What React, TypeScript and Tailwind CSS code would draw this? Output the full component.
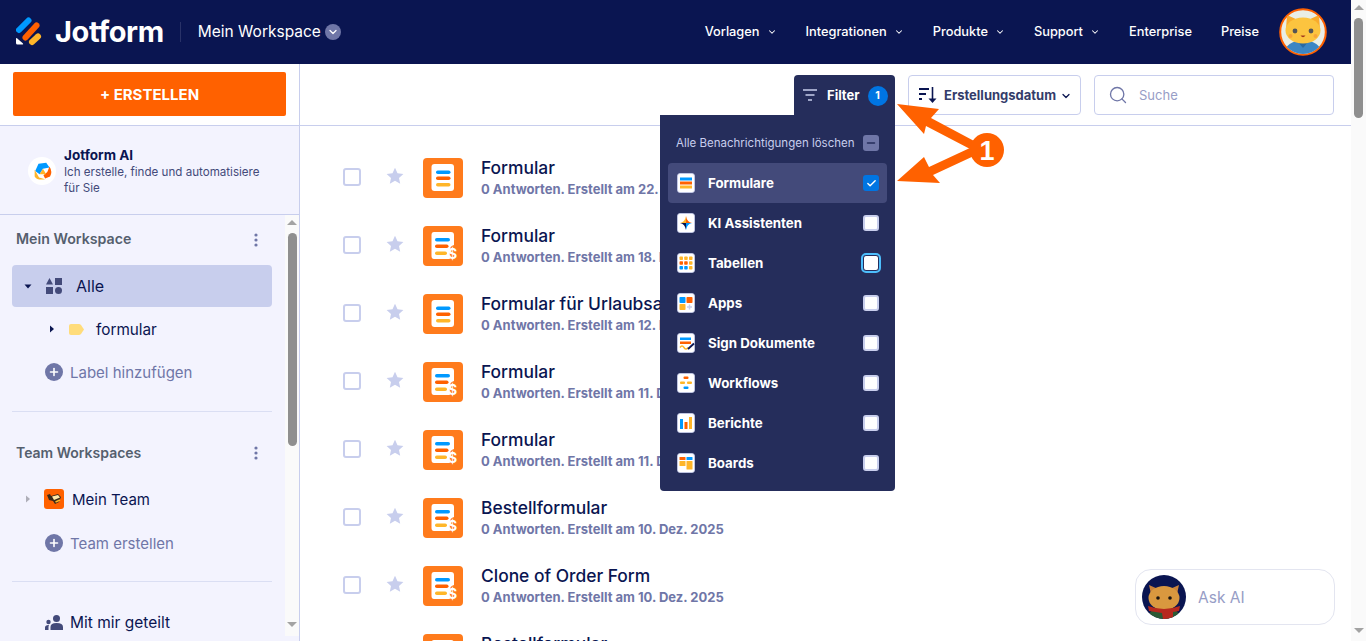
import React from 'react'
import { ChevronDown, Search, Check, Plus, Minus } from 'lucide-react'

const navItems = [
  { label: 'Vorlagen', chevron: true },
  { label: 'Integrationen', chevron: true },
  { label: 'Produkte', chevron: true },
  { label: 'Support', chevron: true },
  { label: 'Enterprise', chevron: false },
  { label: 'Preise', chevron: false },
]

const forms = [
  { title: 'Formular', date: '22. Dez. 2025', pay: false },
  { title: 'Formular', date: '18. Dez. 2025', pay: true },
  { title: 'Formular für Urlaubsantrag', date: '12. Dez. 2025', pay: false },
  { title: 'Formular', date: '11. Dez. 2025', pay: true },
  { title: 'Formular', date: '11. Dez. 2025', pay: true },
  { title: 'Bestellformular', date: '10. Dez. 2025', pay: true },
  { title: 'Clone of Order Form', date: '10. Dez. 2025', pay: true },
  { title: 'Bestellformular', date: '10. Dez. 2025', pay: true },
]

const Logo = () => (
  <svg width="28" height="30" viewBox="0 0 28 30" className="shrink-0">
    <path d="M3 13 L12.5 3.5" stroke="#0099ff" strokeWidth="6" strokeLinecap="round" />
    <path d="M9.5 20.5 L20.5 8.5" stroke="#ff6100" strokeWidth="6" strokeLinecap="round" />
    <path d="M16 25 L22 19.5" stroke="#ffb629" strokeWidth="6" strokeLinecap="round" />
    <path d="M0 21.5 Q0 20.5 1 21.2 L7 26.6 Q7.6 27.6 6.5 27.6 L1.5 27.6 Q0 27.6 0 26 Z" fill="#fff" />
  </svg>
)

const HeaderCat = () => (
  <svg width="48" height="48" viewBox="0 0 48 48" className="shrink-0">
    <clipPath id="hc"><circle cx="24" cy="24" r="22" /></clipPath>
    <circle cx="24" cy="24" r="22.8" fill="#e9eee6" stroke="#ff6100" strokeWidth="2" />
    <g clipPath="url(#hc)">
      <path d="M4 48 Q6 33 24 32 Q42 33 44 48 Z" fill="#3b86c4" />
      <path d="M19 34 L24 40 L29 34 Z" fill="#2a6aa3" />
      <path d="M8 7 L7 21 L19 12 Z M40 7 L41 21 L29 12 Z" fill="#f9ab2c" />
      <ellipse cx="24" cy="22.500" rx="17.500" ry="13" fill="#fcc43f" />
      <circle cx="16" cy="23" r="2.400" fill="#555" />
      <circle cx="32" cy="23" r="2.400" fill="#555" />
      <circle cx="11.500" cy="28" r="2" fill="#f7a53a" />
      <circle cx="36.500" cy="28" r="2" fill="#f7a53a" />
      <path d="M21.500 27.500 Q24 31 26.500 27.500 Z" fill="#a33a1c" />
    </g>
  </svg>
)

const AskCat = () => (
  <svg width="44" height="44" viewBox="0 0 44 44" className="shrink-0">
    <clipPath id="ac"><circle cx="22" cy="22" r="22" /></clipPath>
    <circle cx="22" cy="22" r="22" fill="#0a1551" />
    <g clipPath="url(#ac)">
      <path d="M6 44 Q7 32 22 32 Q37 32 38 44 Z" fill="#2c5a34" />
      <path d="M7 10 L9 19 L16 14 Z M37 10 L35 19 L28 14 Z" fill="#c9823a" />
      <ellipse cx="22" cy="23" rx="15.500" ry="12" fill="#d9983f" />
      <circle cx="16" cy="23" r="1.800" fill="#1b1410" />
      <circle cx="28" cy="23" r="1.800" fill="#1b1410" />
      <path d="M6 31 Q22 37 38 31 L37 36 L31 37 L31 44 L21 44 L20 38 L7 36 Z" fill="#b7281e" />
    </g>
  </svg>
)

const AiIcon = () => (
  <svg width="28" height="28" viewBox="0 0 28 28" className="mt-[2px] shrink-0">
    <circle cx="14" cy="14" r="14" fill="#fff" />
    <g transform="translate(-0.5 -1.5) scale(1.1)">
      <path d="M10 7.500 L17 6.500 L20 11 L14 12 L11 17 L7 14 Z" fill="#0099ff" />
      <path d="M20 10 Q23 15 20.500 19 L16 21 L14.500 18 L18 15 Z" fill="#ff6100" />
      <path d="M6.500 13 L10.500 20 L16 21.500 Q9 23 6.500 19 Z" fill="#ffb629" />
      <path d="M11 17 L14 12 L17 17 Z" fill="#ffb629" />
    </g>
  </svg>
)

const Dots = () => (
  <svg width="4" height="14" viewBox="0 0 4 14">
    <circle cx="2" cy="2" r="1.6" fill="#6f76a7" />
    <circle cx="2" cy="7" r="1.6" fill="#6f76a7" />
    <circle cx="2" cy="12" r="1.6" fill="#6f76a7" />
  </svg>
)

const Caret = ({ dir, color = '#0a1551' }: { dir: 'down' | 'right'; color?: string }) => (
  <svg width="8" height="8" viewBox="0 0 8 8" className="shrink-0">
    <path d={dir === 'down' ? 'M0.500 2.500 H7.500 L4 6.500 Z' : 'M2 0.500 L6 4 L2 7.500 Z'} fill={color} />
  </svg>
)

const AddRow = ({ label }: { label: string }) => (
  <div className="flex h-[42px] items-center pl-[45px]">
    <span className="flex h-[18px] w-[18px] items-center justify-center rounded-full bg-[#6f76a7]">
      <Plus size={12} color="#fff" strokeWidth={3.2} />
    </span>
    <span className="ml-[7px] mt-[2px] text-[15px] text-[#6f76a7]">{label}</span>
  </div>
)

const FormIcon = ({ pay }: { pay: boolean }) => (
  <svg width="40" height="40" viewBox="0 0 40 40" className="shrink-0">
    <rect width="40" height="40" rx="4" fill="#ff7b1c" />
    {pay ? (
      <>
        <path d="M11 6 H28 Q31 6 31 9 V19 Q27 20 26.800 24 V33 H11 Q8.500 33 8.500 30 V9 Q8.500 6 11 6 Z" fill="#fff" />
        <rect x="12" y="12" width="15" height="3.500" rx="1.750" fill="#0099ff" />
        <rect x="12" y="18.500" width="13.500" height="3.500" rx="1.750" fill="#ff6100" />
        <rect x="12" y="25.500" width="12" height="3.500" rx="1.750" fill="#ffb629" />
        <text x="29.500" y="33" textAnchor="middle" fontSize="14" fontWeight="700" fill="#fff" fontFamily="Inter, sans-serif">$</text>
      </>
    ) : (
      <>
        <rect x="8.500" y="6" width="22.500" height="27" rx="3" fill="#fff" />
        <rect x="13" y="12.500" width="14.500" height="3.500" rx="1.750" fill="#0099ff" />
        <rect x="13" y="18.500" width="14.500" height="3.500" rx="1.750" fill="#ff6100" />
        <rect x="13" y="25" width="14.500" height="3.500" rx="1.750" fill="#ffb629" />
      </>
    )}
  </svg>
)

const Star = () => (
  <svg width="18" height="18" viewBox="0 0 18 18" className="shrink-0">
    <path d="M9 .8 L11.500 6.200 L17.400 6.900 L13 10.900 L14.200 16.800 L9 13.800 L3.800 16.800 L5 10.900 L.6 6.900 L6.500 6.200 Z" fill="#c8ceed" />
  </svg>
)

const tile = (children: React.ReactNode) => (
  <svg width="20" height="20" viewBox="0 0 20 20">
    <rect x=".5" y=".5" width="17" height="19" rx="2.500" fill="#fff" stroke="#c8ceed" strokeWidth=".8" transform="translate(1 0)" />
    {children}
  </svg>
)

const filterItems: { label: string; icon: React.ReactNode }[] = [
  {
    label: 'Formulare',
    icon: tile(
      <>
        <rect x="4" y="4.500" width="12" height="3" fill="#0099ff" />
        <rect x="4" y="8.500" width="12" height="3" fill="#ff6100" />
        <rect x="4" y="12.500" width="12" height="3" fill="#ffb629" />
      </>,
    ),
  },
  {
    label: 'KI Assistenten',
    icon: tile(
      <>
        <path d="M10 3 L10 10 L4 10 Q9 9 10 3 Z" fill="#ffb629" />
        <path d="M10 3 Q11 9 16 10 L10 10 Z" fill="#ff6100" />
        <path d="M10 17 L10 10 L4 10 Q9 11 10 17 Z" fill="#0a1551" />
        <path d="M10 17 Q11 11 16 10 L10 10 Z" fill="#0099ff" />
      </>,
    ),
  },
  {
    label: 'Tabellen',
    icon: tile(
      <>
        <rect x="3.500" y="3.500" width="3.500" height="3.500" rx=".8" fill="#ffb629" />
        <rect x="8.200" y="3.500" width="3.500" height="3.500" rx=".8" fill="#ffb629" />
        <rect x="13" y="3.500" width="3.500" height="3.500" rx=".8" fill="#ffb629" />
        <rect x="3.500" y="8.200" width="3.500" height="3.500" rx=".8" fill="#ff6100" />
        <rect x="8.200" y="8.200" width="3.500" height="3.500" rx=".8" fill="#ff6100" />
        <rect x="13" y="8.200" width="3.500" height="3.500" rx=".8" fill="#ffb629" />
        <rect x="3.500" y="13" width="3.500" height="3.500" rx=".8" fill="#0099ff" />
        <rect x="8.200" y="13" width="3.500" height="3.500" rx=".8" fill="#0099ff" />
        <rect x="13" y="13" width="3.500" height="3.500" rx=".8" fill="#ffb629" />
      </>,
    ),
  },
  {
    label: 'Apps',
    icon: tile(
      <>
        <rect x="3.500" y="4" width="6" height="6" rx=".8" fill="#0099ff" />
        <rect x="10.500" y="4" width="6" height="6" rx=".8" fill="#ff6100" />
        <rect x="3.500" y="11" width="6" height="6" rx=".8" fill="#ffb629" />
        <path d="M13.500 11.500 V16.500 M11 14 H16" stroke="#c8ceed" strokeWidth="1.500" />
      </>,
    ),
  },
  {
    label: 'Sign Dokumente',
    icon: tile(
      <>
        <rect x="4" y="4.500" width="11" height="2.500" fill="#0099ff" />
        <rect x="4" y="8.500" width="11" height="2.500" fill="#ff6100" />
        <path d="M4 14.500 Q6 11.500 8 14.500 T12 14.500" stroke="#ffb629" strokeWidth="1.500" fill="none" />
        <path d="M12 16 L18 10.500" stroke="#0a1551" strokeWidth="1.800" />
      </>,
    ),
  },
  {
    label: 'Workflows',
    icon: tile(
      <>
        <rect x="7.500" y="3.500" width="5" height="2.500" rx="1" fill="#ff6100" />
        <rect x="4" y="8.500" width="5" height="2.500" rx="1" fill="#ffb629" />
        <rect x="11" y="8.500" width="5" height="2.500" rx="1" fill="#ffb629" />
        <rect x="7.500" y="13.500" width="5" height="2.500" rx="1" fill="#0099ff" />
      </>,
    ),
  },
  {
    label: 'Berichte',
    icon: tile(
      <>
        <rect x="4" y="6" width="3" height="10" fill="#0099ff" />
        <rect x="8.500" y="9" width="3" height="7" fill="#ff6100" />
        <rect x="13" y="4" width="3" height="12" fill="#ffb629" />
      </>,
    ),
  },
  {
    label: 'Boards',
    icon: tile(
      <>
        <rect x="3.500" y="4" width="6" height="3" rx=".6" fill="#ff6100" />
        <rect x="10.500" y="4" width="6" height="3" rx=".6" fill="#0099ff" />
        <rect x="3.500" y="8" width="6" height="5" rx=".6" fill="#ffb629" />
        <rect x="10.500" y="8" width="6" height="8.500" rx=".6" fill="#ffb629" />
      </>,
    ),
  },
]

const FilterMenu = () => (
  <div className="absolute right-0 top-[40px] z-20 w-[235px] h-[376px] rounded-b bg-[#252d5b] px-2 pt-2">
    <div className="flex h-10 items-center pl-2 pr-2">
      <span className="mt-[2px] flex-1 text-[11.5px] text-[#c8ceed]">Alle Benachrichtigungen löschen</span>
      <span className="flex h-4 w-4 items-center justify-center rounded-[3px] bg-[#6f76a7]">
        <Minus size={12} color="#252d5b" strokeWidth={3} />
      </span>
    </div>
    {filterItems.map((item, i) => (
      <div key={item.label} className={`flex h-10 items-center rounded pl-2 pr-2 ${i === 0 ? 'bg-[#434a7a]' : ''}`}>
        <span className="flex w-5 justify-center">{item.icon}</span>
        <span className="ml-3 mt-[2px] flex-1 text-[13.300px] font-bold text-white">{item.label}</span>
        {i === 0 ? (
          <span className="flex h-4 w-4 items-center justify-center rounded-[3px] bg-[#0075e3]">
            <Check size={11} color="#fff" strokeWidth={3} />
          </span>
        ) : (
          <span className={`h-4 w-4 rounded-[3px] bg-white ${i === 2 ? 'border border-[#252d5b] outline-2 outline-[#4dbefc]' : 'border-2 border-[#c8ceed]'}`} />
        )}
      </div>
    ))}
  </div>
)

const Toolbar = () => (
  <div className="flex h-[62px] shrink-0 justify-end border-b border-[#c8ceed] pr-[17px] pt-[11px]">
    <div className="relative flex h-[50px] w-[101px] items-start rounded-t bg-[#252d5b] pl-[9px] pt-[11px]">
      <svg width="14" height="12" viewBox="0 0 14 12" className="mt-[3px]">
        <path d="M0 1 H14 M2.500 6 H11.500 M5 11 H9" stroke="#c8ceed" strokeWidth="1.500" />
      </svg>
      <span className="ml-[10px] text-[13px] font-bold leading-[18px] text-white">Filter</span>
      <span className="ml-[8px] flex h-5 w-5 items-center justify-center rounded-full bg-[#0075e3] text-[10.5px] font-bold text-white">1</span>
      <FilterMenu />
    </div>
    <div className="ml-[13px] flex h-10 w-[173px] items-center rounded border border-[#c8ceed] pl-[10px]">
      <svg width="18" height="18" viewBox="0 0 18 18" className="shrink-0">
        <path d="M0 3 H10 M0 8 H7 M0 13 H3" stroke="#0a1551" strokeWidth="2" />
        <path d="M13.500 1 V14" stroke="#0a1551" strokeWidth="1.600" />
        <path d="M9.500 12.500 H17.500 L13.500 17 Z" fill="#0a1551" />
      </svg>
      <span className="ml-[7px] mt-[2px] text-[13px] font-bold text-[#343c6a]">Erstellungsdatum</span>
      <ChevronDown size={12} strokeWidth={2.5} color="#0a1551" className="ml-[4px] mt-[2px]" />
    </div>
    <div className="ml-[13px] flex h-10 w-[240px] items-center rounded border border-[#c8ceed] pl-[13px]">
      <Search size={20} color="#6f76a7" strokeWidth={1.6} />
      <span className="ml-[11px] mt-[2px] text-[13px] text-[#979dc6]">Suche</span>
    </div>
  </div>
)

const FormList = () => (
  <div className="flex-1 overflow-hidden pt-[18px]">
    {forms.map((form, i) => (
      <div key={i} className="flex h-[68px] items-center pl-[43px]">
        <span className="mb-[2px] h-[18px] w-[18px] shrink-0 rounded-[3px] border-2 border-[#c8ceed] bg-white" />
        <span className="mb-[4px] ml-[25px]"><Star /></span>
        <span className="ml-[19px]"><FormIcon pay={form.pay} /></span>
        <div className="ml-[18px]">
          <div className="text-[17.400px] font-medium leading-[22px] text-[#0a1551]">{form.title}</div>
          <div className="text-[13px] font-bold leading-[21px] text-[#6f76a7]">0 Antworten. Erstellt am {form.date}</div>
        </div>
      </div>
    ))}
  </div>
)

const Sidebar = () => (
  <aside className="flex w-[300px] shrink-0 flex-col border-r border-[#c8ceed] bg-[#f3f3fe]">
    <div className="h-[62px] shrink-0 border-b border-[#c8ceed] bg-white px-[13px] pt-[8px]">
      <button className="h-[44px] w-[273px] rounded-[2px] bg-[#ff6100] pt-[2px] text-[15px] font-bold text-white">+ ERSTELLEN</button>
    </div>
    <div className="flex h-[89px] shrink-0 items-center border-b border-[#c8ceed] pl-[28px]">
      <AiIcon />
      <div className="ml-[8px] mt-[2px] w-[205px]">
        <div className="text-[13.500px] font-bold leading-[17px] text-[#0a1551]">Jotform AI</div>
        <div className="text-[11.600px] leading-[16px] text-[#434a7a]">Ich erstelle, finde und automatisiere für Sie</div>
      </div>
    </div>
    <div className="flex min-h-0 flex-1">
      <div className="w-[285px] shrink-0 overflow-hidden text-[#0a1551]">
        <div className="flex h-[50px] items-center justify-between pl-[16px] pr-[27px]">
          <span className="mb-[2px] text-[14.200px] font-semibold text-[#555f6e]">Mein Workspace</span>
          <Dots />
        </div>
        <div className="mx-3 flex h-[42px] w-[260px] items-center rounded bg-[#c8ceed] pl-[12px]">
          <Caret dir="down" />
          <svg width="16" height="16" viewBox="0 0 16 16" className="ml-[14px]">
            <path d="M3.500 0 L7 6.500 H0 Z M9 0 H16 V7 H9 Z M0 9 H7 V16 H0 Z" fill="#434a7a" />
            <circle cx="12.500" cy="12.500" r="3.500" fill="#434a7a" />
          </svg>
          <span className="ml-[14px] text-[16px]">Alle</span>
        </div>
        <div className="flex h-[44px] items-center pl-[48px]">
          <Caret dir="right" />
          <svg width="15" height="11" viewBox="0 0 15 11" className="ml-[13px]">
            <path d="M2 0 H10 Q11 0 12 1 L15 5.500 L12 10 Q11 11 10 11 H2 Q0 11 0 9 V2 Q0 0 2 0 Z" fill="#ffdc7b" />
          </svg>
          <span className="ml-[12px] mt-[2px] text-[15.300px]">formular</span>
        </div>
        <AddRow label="Label hinzufügen" />
        <div className="mx-3 mt-[18px] h-px w-[260px] bg-[#dadef3]" />
        <div className="mt-[20px] flex h-[42px] items-center justify-between pl-[16px] pr-[27px]">
          <span className="mb-[2px] text-[14px] font-semibold text-[#555f6e]">Team Workspaces</span>
          <Dots />
        </div>
        <div className="mt-[3px] flex h-[44px] items-center pl-[24px]">
          <Caret dir="right" color="#aeaeb8" />
          <span className="ml-[12px] flex h-5 w-5 items-center justify-center rounded-[3px] bg-[#ff6100]">
            <svg width="16" height="12" viewBox="0 0 16 12">
              <path d="M1 2 L4 1 L5 3 L12 1 L15 4 L13 9 L9 11 L7 8 L3 7 Z" fill="#3a2a1a" />
              <path d="M6 3.500 L12 2 L14 4.500 L8 7 Z" fill="#ffe9a8" />
              <path d="M9.500 9 L14 7" stroke="#ffb629" strokeWidth="1.500" />
            </svg>
          </span>
          <span className="ml-[8px] mt-[2px] text-[15px]">Mein Team</span>
        </div>
        <div className="mt-px"><AddRow label="Team erstellen" /></div>
        <div className="mx-3 mt-[17px] h-px w-[260px] bg-[#dadef3]" />
        <div className="mt-[19px] flex h-[42px] items-center pl-[45px]">
          <svg width="18" height="15" viewBox="0 0 18 15">
            <circle cx="11.500" cy="3.500" r="3.500" fill="#434a7a" />
            <path d="M5.500 15 V12 Q5.500 8 11.500 8 Q18 8 18 12 V15 Z" fill="#434a7a" />
            <circle cx="3.500" cy="7" r="2.200" fill="#434a7a" />
            <path d="M0 15 V12.500 Q0 10 3.500 10 L4 10 Q3.500 11 3.500 12 V15 Z" fill="#434a7a" />
          </svg>
          <span className="ml-[7px] mt-[2px] text-[15.500px]">Mit mir geteilt</span>
        </div>
      </div>
      <div className="flex h-[421px] w-[14px] shrink-0 flex-col items-center bg-[#fafafa]">
        <svg width="10" height="6" viewBox="0 0 10 6" className="mt-[5px]"><path d="M5 0 L10 5 H0 Z" fill="#a3a3a3" /></svg>
        <div className="mt-[7px] h-[213px] w-[9px] rounded-full bg-[#8f8f8f]" />
        <svg width="10" height="6" viewBox="0 0 10 6" className="mt-auto mb-[8px]"><path d="M5 5 L10 0 H0 Z" fill="#a3a3a3" /></svg>
      </div>
    </div>
  </aside>
)

const Header = () => (
  <header className="flex h-16 shrink-0 items-center bg-[#0a1551] pl-[16px] pr-[24px]">
    <Logo />
    <span className="ml-[11px] text-[29px] font-bold tracking-[-0.4px] text-white">Jotform</span>
    <span className="ml-[16px] h-5 w-px bg-[#293268]" />
    <span className="ml-[17px] text-[15.500px] text-white">Mein Workspace</span>
    <span className="ml-[4px] flex h-4 w-4 items-center justify-center rounded-full bg-[#6f76a7]">
      <ChevronDown size={12} color="#fff" strokeWidth={2.5} />
    </span>
    <nav className="ml-auto mr-[20px] flex items-center gap-[29px]">
      {navItems.map(item => (
        <div key={item.label} className="flex items-center">
          <span className="text-[12.800px] font-medium text-white">{item.label}</span>
          {item.chevron && <ChevronDown size={10} color="#fff" strokeWidth={2.5} className="ml-[7px]" />}
        </div>
      ))}
    </nav>
    <HeaderCat />
  </header>
)

const PageScrollbar = () => (
  <div className="flex w-[15px] shrink-0 flex-col items-center bg-[#fafafa]">
    <svg width="10" height="6" viewBox="0 0 10 6" className="mt-[5px]"><path d="M5 0 L10 5 H0 Z" fill="#a3a3a3" /></svg>
    <div className="mt-[7px] h-[100px] w-[9px] rounded-full bg-[#8f8f8f]" />
    <svg width="10" height="6" viewBox="0 0 10 6" className="mt-auto mb-[7px]"><path d="M5 5 L10 0 H0 Z" fill="#a3a3a3" /></svg>
  </div>
)

// Annotation arrows that sit on top of the page
const Annotation = () => (
  <svg width="1366" height="641" viewBox="0 0 1366 641" className="pointer-events-none absolute left-0 top-0 z-30">
    <path d="M897 104 L939 109 L931 118 L976 142 L972 150 L926 126 L924 134 Z" fill="#ff6100" />
    <path d="M897 181 L924 157 L929 167 L972 147 L976 155 L933 175 L940 183 Z" fill="#ff6100" />
    <circle cx="987" cy="150" r="17" fill="#ff6100" />
    <text x="987" y="160" textAnchor="middle" fontSize="27" fontWeight="700" fill="#fff" fontFamily="'Liberation Sans', sans-serif">1</text>
  </svg>
)

const AskAi = () => (
  <div className="absolute left-[1135px] top-[569px] z-10 flex h-[56px] w-[200px] items-center rounded-2xl border border-[#e3e5f0] bg-white pl-[6px]">
    <AskCat />
    <span className="ml-[12px] mt-[2px] text-[15.5px] text-[#979dc6]">Ask AI</span>
  </div>
)

const App = () => (
  <div className="relative flex h-[641px] w-full overflow-hidden bg-white font-['Inter',sans-serif]">
    <div className="flex min-w-0 flex-1 flex-col">
      <Header />
      <div className="flex min-h-0 flex-1">
        <Sidebar />
        <main className="flex min-w-0 flex-1 flex-col">
          <Toolbar />
          <FormList />
        </main>
      </div>
    </div>
    <PageScrollbar />
    <AskAi />
    <Annotation />
  </div>
)

export default App
